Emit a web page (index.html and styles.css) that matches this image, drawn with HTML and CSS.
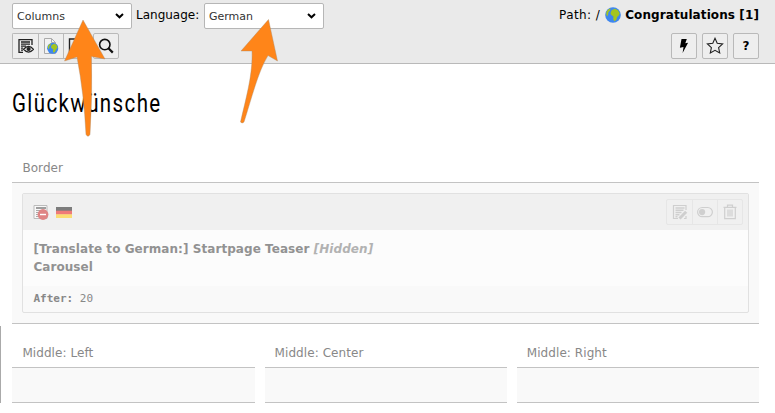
FILE: index.html
```html
<!DOCTYPE html>
<html lang="en">
<head>
<meta charset="utf-8">
<title>Page module</title>
<link rel="stylesheet" href="styles.css">
</head>
<body>
<svg class="defs" width="0" height="0">
  <defs>
    <symbol id="globe" viewBox="0 0 16 16"><circle cx="8" cy="8" r="7.8" fill="#3f87ee"/><path d="M1.500 4.500Q3 2 5.500 1.200L5 3.500 3.500 5 3 8 2 9.500Q.8 7 1.500 4.500zM7 3l3-1.200 3 1.400 1.800 3-1 2.300-1.600 1.500-1 3-2 1.200-1-2.200.3-2.500L7 8.500 5.500 7 6 4.500z" fill="#a4c520"/></symbol>
    <symbol id="chevron" viewBox="0 0 9 6"><path d="M1 1l3.500 3.300L8 1" fill="none" stroke="#000" stroke-width="2"/></symbol>
  </defs>
</svg>
<header class="docheader">
  <div class="row">
    <div class="select"><span>Columns</span><svg class="chevron"><use href="#chevron"/></svg></div>
    <span class="language">Language:</span>
    <div class="select"><span>German</span><svg class="chevron"><use href="#chevron"/></svg></div>
    <div class="path"><span class="crumb">Path: /</span><svg class="globe"><use href="#globe"/></svg><b>Congratulations [1]</b></div>
  </div>
  <div class="row buttons">
    <div class="group">
      <span class="btn"><svg width="16" height="16" viewBox="0 0 16 16"><path d="M5 14.400H1V1.600h13V7" fill="none" stroke="#222" stroke-width="1.300"/><path d="M3 4h9M3 6.200h9M3 8.200h5M3 10.200h2M3 12.200h2" stroke="#222" stroke-width="1.300"/><path d="M5.600 11.300q5-5.700 9.900 0-5 5.500-9.900 0z" fill="#eee" stroke="#222" stroke-width="1.300"/><circle cx="10.600" cy="11" r="2.100" fill="#222"/></svg></span>
      <span class="btn"><svg width="16" height="16" viewBox="0 0 16 16"><path d="M1.500.5h7l4 4v11h-11z" fill="#f2f2f2" stroke="#aaa"/><path d="M8.500.5v4h4" fill="none" stroke="#aaa"/><use href="#globe" x="4" y="4.500" width="11.500" height="11.500"/></svg></span>
      <span class="btn"><svg width="16" height="16" viewBox="0 0 16 16"><path d="M1.500 1h11v13.600h-11z" fill="none" stroke="#222" stroke-width="1.400"/></svg></span>
    </div>
    <span class="btn single search"><svg width="16" height="16" viewBox="0 0 16 16"><circle cx="6.800" cy="6.600" r="5.200" fill="none" stroke="#111" stroke-width="1.600"/><path d="M10.400 10.200l4.400 4.400" stroke="#111" stroke-width="2.200"/></svg></span>
    <div class="tools">
      <span class="btn single"><svg width="16" height="16" viewBox="0 0 16 16"><path d="M5.500 1h5.300L9.300 5.200l2.800-.5L6.600 15l.9-6-3.600.8z" fill="#000"/></svg></span>
      <span class="btn single"><svg width="18" height="18" viewBox="0 0 18 18"><path d="M9 1.300l2.200 5 5.400.6-4 3.700 1.100 5.400L9 13.300 4.300 16l1.100-5.400-4-3.700 5.400-.6z" fill="none" stroke="#222" stroke-width="1.100"/></svg></span>
      <span class="btn single help">?</span>
    </div>
  </div>
</header>
<main>
  <h1><span>Glückwünsche</span></h1>
  <section>
    <h2>Border</h2>
    <div class="zone">
      <article class="card">
        <div class="cardhead">
          <svg width="16" height="16" viewBox="0 0 16 16"><path d="M1 1.500h13v13H1z" fill="#f8f8f8" stroke="#bbb"/><path d="M3 4h10" stroke="#888" stroke-width="1.600"/><path d="M3 6.500h6M3 8.500h3M3 10.500h2M3 12.500h2" stroke="#aaa"/><circle cx="10" cy="10.500" r="5.400" fill="#df8585"/><path d="M7 10.500h6" stroke="#fff" stroke-width="1.400"/></svg>
          <svg class="flag" width="16" height="11" viewBox="0 0 16 11"><path d="M0 0h16v4H0z" fill="#7c7c7c"/><path d="M0 3.700h16v4H0z" fill="#ef7b79"/><path d="M0 7.300h16V11H0z" fill="#fbdd73"/></svg>
          <div class="actions">
            <span><svg width="16" height="16" viewBox="0 0 16 16"><path d="M14 6V1.500H1.500v13H6M14 12v2.500h-2" fill="none" stroke="#cfcfcf" stroke-width="1.200"/><path d="M3.500 4h9M3.500 6.300h8M3.500 8.500h6M3.500 10.700h4M3.500 12.700h2" stroke="#cfcfcf" stroke-width="1.400"/><path d="M7.500 14.500l6.700-6.700" stroke="#cfcfcf" stroke-width="3"/></svg></span>
            <span><svg width="16" height="16" viewBox="0 0 16 16"><rect x=".6" y="3.500" width="14.800" height="9.200" rx="4.600" fill="none" stroke="#cfcfcf" stroke-width="1.200"/><circle cx="5.100" cy="8.100" r="3.100" fill="#cfcfcf"/></svg></span>
            <span><svg width="16" height="16" viewBox="0 0 16 16"><path d="M2.700 3.600v11h10.600v-11M1.500 3.300h13M5.500 3V1.200h5V3M6 5.500v7M8 5.500v7M10 5.500v7" fill="none" stroke="#cfcfcf" stroke-width="1.200"/></svg></span>
          </div>
        </div>
        <div class="cardbody">[Translate to German:] Startpage Teaser <i>[Hidden]</i><br>Carousel</div>
        <div class="cardfoot"><b>After:</b> 20</div>
      </article>
    </div>
  </section>
  <div class="columns">
    <section><h2>Middle: Left</h2><div class="slot"></div></section>
    <section><h2>Middle: Center</h2><div class="slot"></div></section>
    <section><h2>Middle: Right</h2><div class="slot"></div></section>
  </div>
</main>
<div class="handle"></div>
<svg class="arrows" width="775" height="413" viewBox="0 0 775 413">
  <path d="M83 20L105 59 91.500 56.500Q92.500 94 90 134.500Q88 138 86 134.500Q84 94 77 57L64.500 61Z"/>
  <path d="M268.500 19.500L277.500 61 268 55.500C258 72 252 97 244 122Q242 124 240.500 122C246 98 253 74 252 51H241Z"/>
</svg>
</body>
</html>
```
FILE: styles.css
```css
* { box-sizing: border-box; }
body { margin: 0; height: 413px; overflow: hidden; position: relative; background: #fff; color: #000; font: 12px "DejaVu Sans", Verdana, sans-serif; }
svg { display: block; flex: none; }
.defs { position: absolute; }
.docheader { height: 64px; padding: 3px 16px 0 12px; background: #eaeaea; border-bottom: 1px solid #b9b9b9; }
.row { display: flex; height: 26px; align-items: center; white-space: nowrap; }
.select { width: 120px; height: 26px; padding: 0 7px 0 4px; display: flex; align-items: center; justify-content: space-between; background: #fff; border: 1px solid #b6b6b6; border-radius: 2px; font-size: 11px; color: #333; }
.chevron { width: 9px; height: 6px; }
.language { width: 72px; padding: 0 0 2px 4px; }
.path { margin-left: auto; padding-bottom: 2px; display: flex; align-items: center; }
.crumb { letter-spacing: .4px; }
.path b { letter-spacing: .1px; }
.globe { width: 16px; height: 16px; margin: 0 4px 0 5px; }
.buttons { margin-top: 4px; }
.group { display: flex; border: 1px solid #b9b9b9; border-right: 0; border-radius: 2px 0 0 2px; }
.group .btn { width: 25px; height: 24px; }
.group .btn + .btn { border-left: 1px solid #b9b9b9; }
.btn { display: flex; align-items: center; justify-content: center; background: #eee; }
.single { width: 26px; height: 26px; border: 1px solid #b9b9b9; border-radius: 2px; }
.search { margin-left: 5px; }
.tools { display: flex; gap: 5px; margin-left: auto; }
.help { font-weight: bold; }
main { padding: 0 16px 0 12.4px; }
h1 { height: 93px; margin: 0; padding-top: 24px; font: 25px/32px Roboto, sans-serif; color: #000; }
h1 span { display: inline-block; letter-spacing: 1.7px; transform: scaleX(.82); transform-origin: left; }
h2 { margin: 0; height: 25px; padding: 3px 10px 0; font: 12px/16px "DejaVu Sans", Verdana, sans-serif; letter-spacing: .07px; color: #888; white-space: nowrap; }
.zone { height: 142px; padding: 10px 10px 0; background: #f9f9f9; border-top: 1px solid #c3c3c3; border-bottom: 1px solid #c3c3c3; }
.card { height: 120px; border: 1px solid #e1e1e1; border-radius: 2px; }
.cardhead { display: flex; align-items: center; height: 36px; padding: 0 5px 0 9.6px; background: #f0f0f0; }
.flag { margin-left: 7px; }
.actions { display: flex; margin-left: auto; height: 26px; border: 1px solid #e6e6e6; border-radius: 2px; }
.actions span { width: 25px; display: flex; align-items: center; justify-content: center; }
.actions span + span { border-left: 1px solid #e6e6e6; }
.cardbody { height: 56px; padding: 10px 10px 0; background: #fcfcfc; color: #929292; font-weight: bold; line-height: 18px; letter-spacing: .06px; }
.cardbody i { color: #b2b2b2; }
.cardfoot { padding: 6px 10px 0; font: 11px/14px "DejaVu Sans Mono", monospace; color: #888; }
.columns { display: grid; grid-template-columns: repeat(3, 1fr); gap: 10px; margin-top: 18px; }
.slot { height: 36px; background: #f9f9f9; border-top: 1px solid #c3c3c3; border-bottom: 1px solid #c3c3c3; }
.handle { position: absolute; left: 0; top: 326px; width: 1px; height: 77px; background: #aaa; }
.arrows { position: absolute; left: 0; top: 0; fill: #ff8519; stroke: #a98b6d; stroke-width: .4; pointer-events: none; }
```
